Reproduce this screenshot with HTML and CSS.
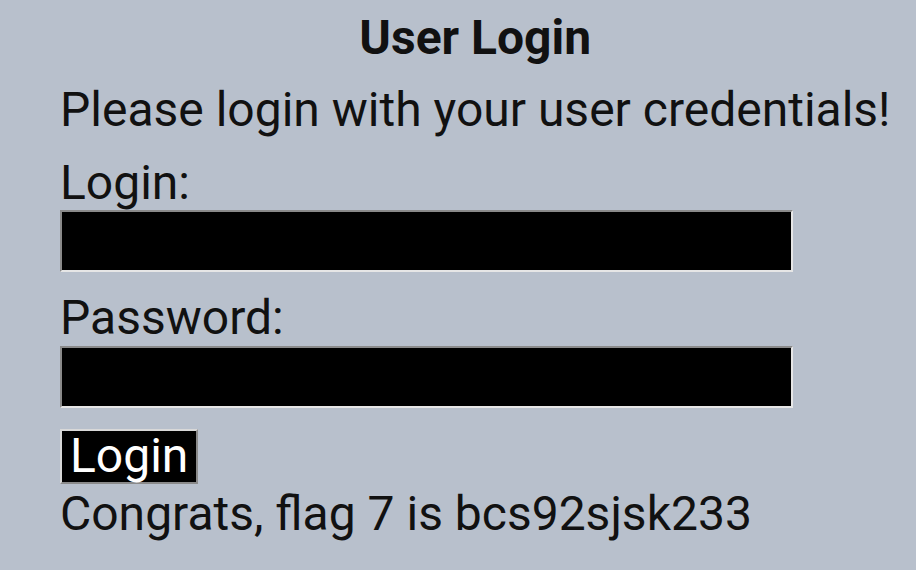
FILE: index.html
```html
<!DOCTYPE html>
<html lang="en">
<head>
  <meta charset="UTF-8" />
  <title>User Login</title>
  <link rel="stylesheet" href="styles.css">
</head>
<body>
  <div class="login-box">
    <h1>User Login</h1>
    <p class="intro">Please login with your user credentials!</p>
    <form class="login-form">
      <label for="login">Login:</label>
      <input type="text" id="login" />
      <label for="password">Password:</label>
      <input type="password" id="password" />
      <button type="submit" class="btn">Login</button>
    </form>
    <p class="flag">Congrats, flag 7 is bcs92sjsk233</p>
  </div>
</body>
</html>
```

FILE: styles.css
```css
* {
  box-sizing: border-box;
  margin: 0;
  padding: 0;
}

body {
  background: #b8c0cc;
  color: #111;
  font-family: Roboto, 'Noto Sans', sans-serif;
  font-size: 48px;
  padding: 10px 0 20px 60px;
}

.login-box {
  width: fit-content;
}

h1 {
  text-align: center;
  font-size: 48px;
  font-weight: 700;
  line-height: 56px;
}

.intro {
  line-height: 56px;
  margin-top: 16px;
}

.login-form {
  display: flex;
  flex-direction: column;
  align-items: flex-start;
}

label {
  line-height: 50px;
  padding-top: 6px;
  margin-top: 14px;
}

label[for="password"] {
  margin-top: 15px;
}

input {
  width: 733px;
  height: 62px;
  background: #000;
  color: #fff;
  border: 2px solid;
  border-color: #8a8a8a #e6e6e6 #e6e6e6 #8a8a8a;
  margin-top: 2px;
}

#password {
  margin-top: 3px;
}

.btn {
  font: inherit;
  background: #000;
  color: #fff;
  padding: 0 8px 2px;
  border: 2px solid;
  border-color: #d8d8d8 #8a8a8a #8a8a8a #d8d8d8;
  height: 55px;
  line-height: 44px;
  margin-top: 21px;
}

.flag {
  margin-top: 1px;
}
```
